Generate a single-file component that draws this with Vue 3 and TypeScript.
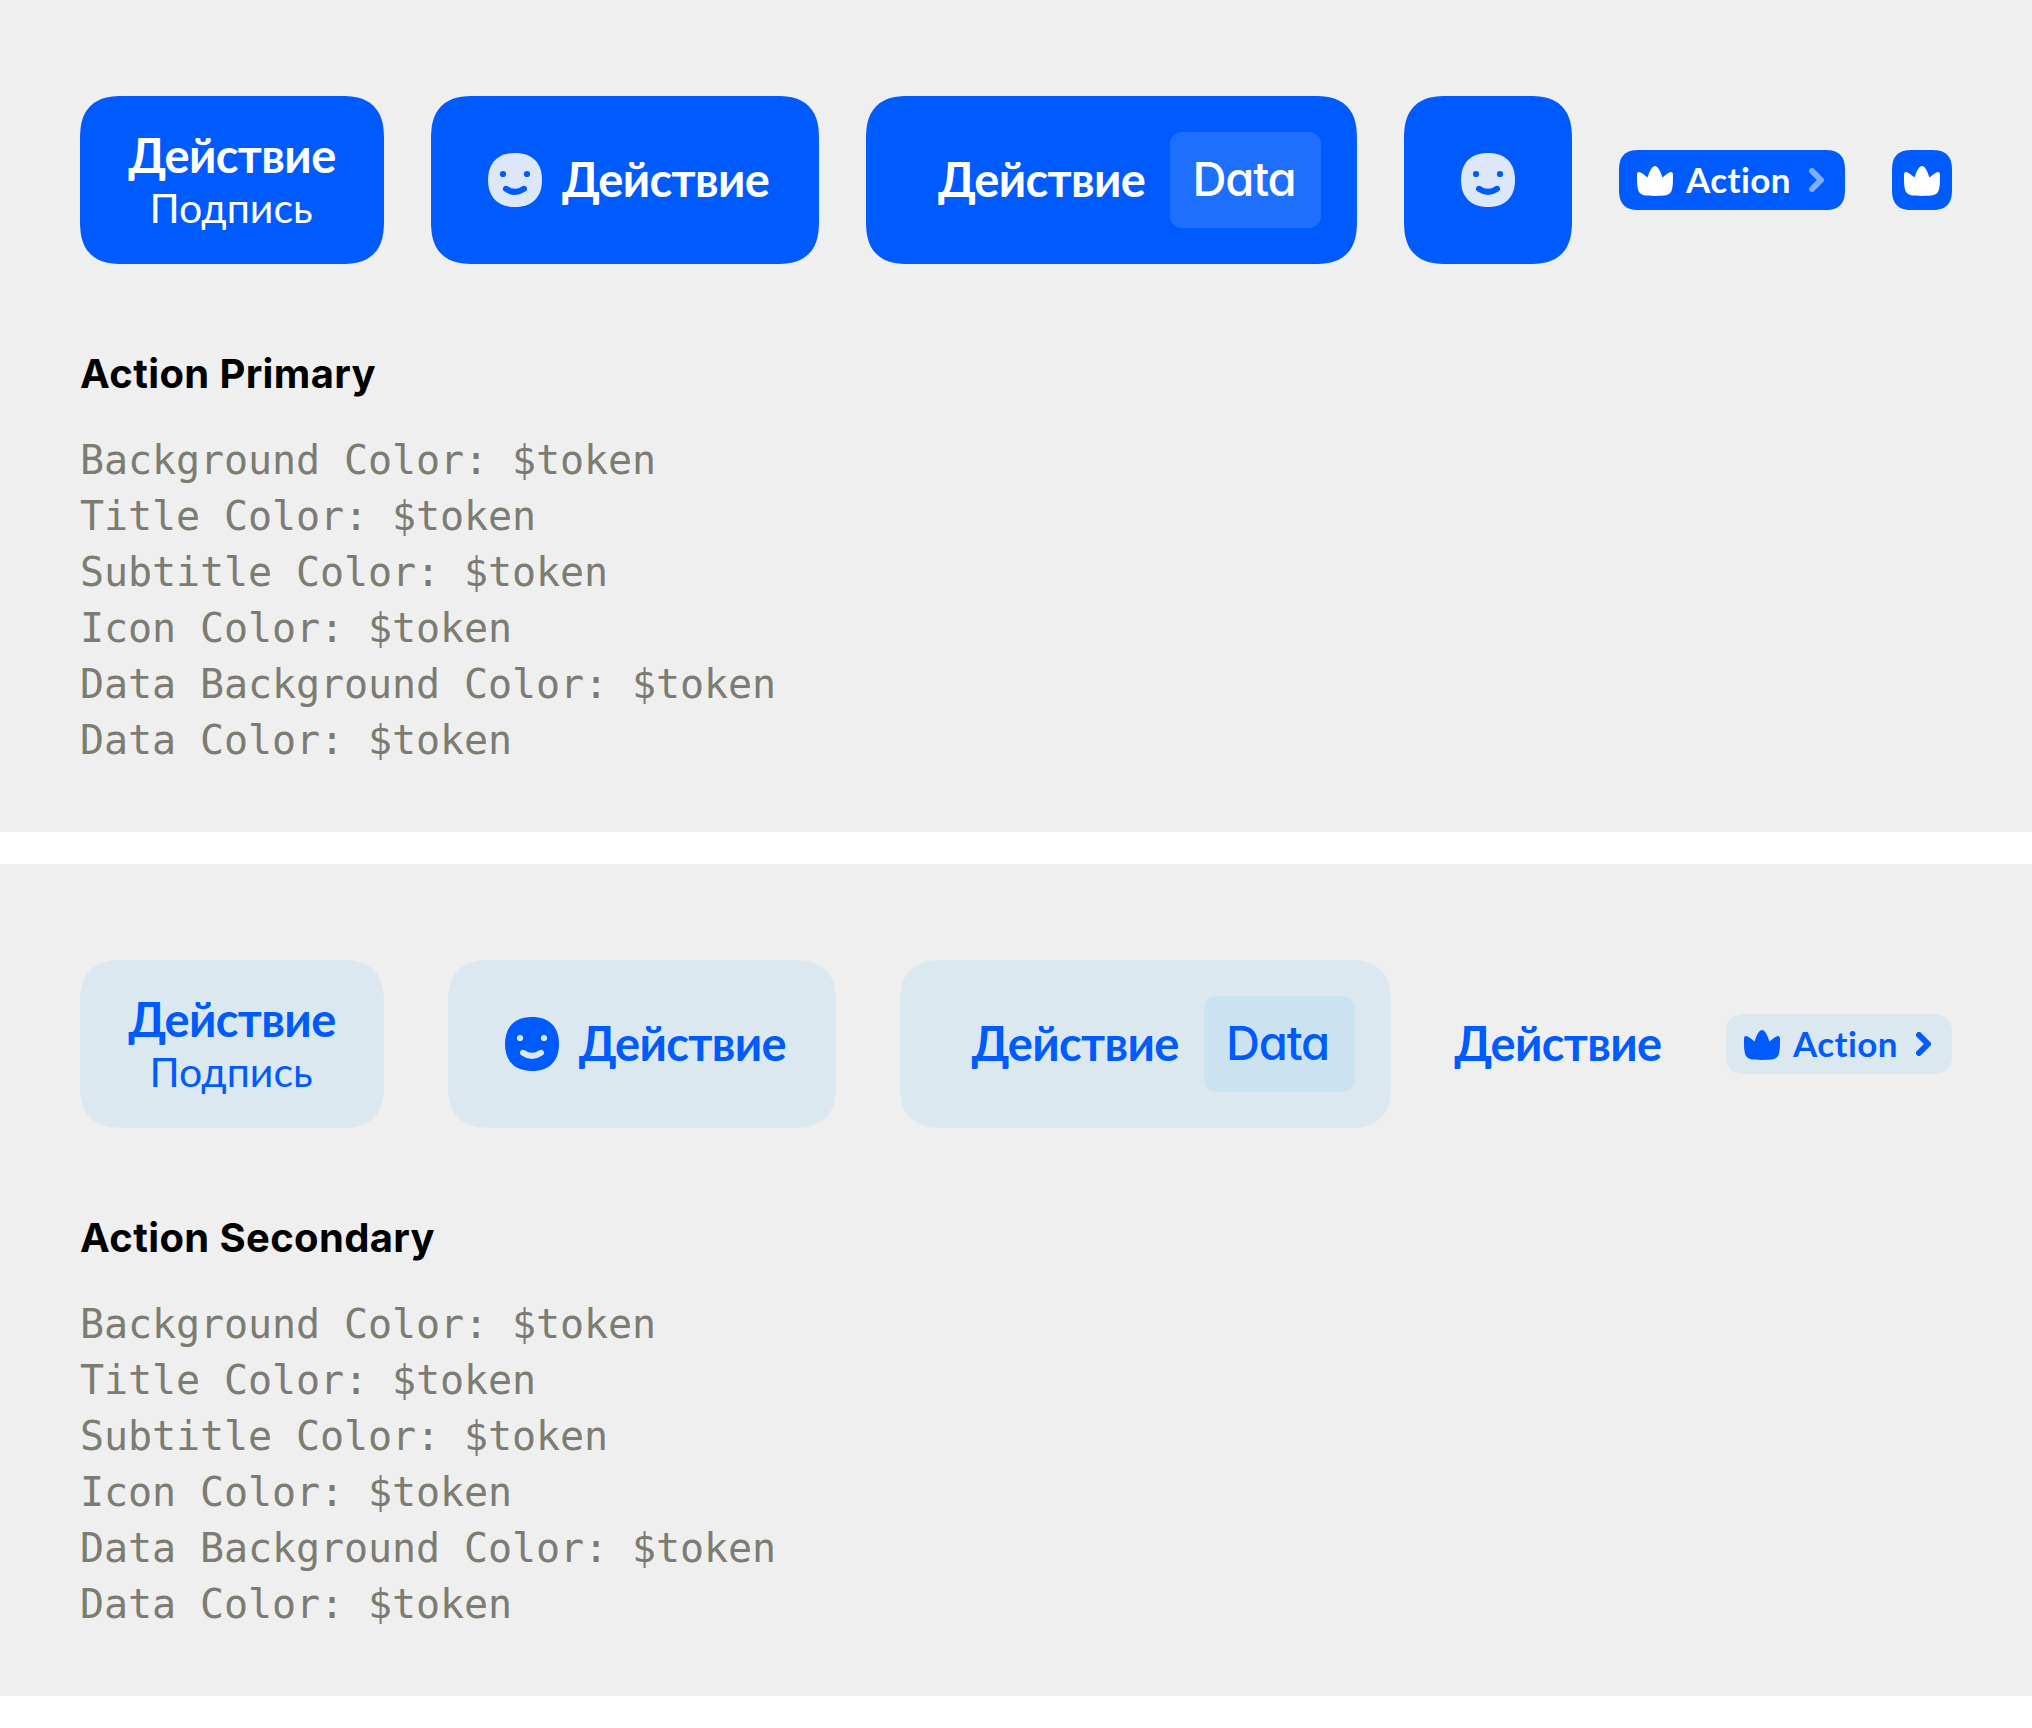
<script setup lang="ts">
type ItemKind = 'double' | 'icon' | 'data' | 'square' | 'text' | 'chip' | 'mini'

interface Section {
  theme: 'primary' | 'secondary'
  title: string
  items: ItemKind[]
}

const sections: Section[] = [
  { theme: 'primary', title: 'Action Primary', items: ['double', 'icon', 'data', 'square', 'chip', 'mini'] },
  { theme: 'secondary', title: 'Action Secondary', items: ['double', 'icon', 'data', 'text', 'chip'] },
]

const tokens: string[] = ['Background', 'Title', 'Subtitle', 'Icon', 'Data Background', 'Data']
</script>

<template>
  <main class="page">
    <section v-for="section in sections" :key="section.theme" class="panel" :class="section.theme">
      <div class="row">
        <div v-for="item in section.items" :key="item" class="item" :class="item">
          <svg v-if="item === 'icon' || item === 'square'" class="face" viewBox="0 0 54 54">
            <path class="head" d="M27 0C44.2 0 54 9.8 54 27S44.2 54 27 54 0 44.2 0 27 9.8 0 27 0Z" />
            <circle class="eye" cx="15" cy="21" r="3.1" />
            <circle class="eye" cx="39" cy="21" r="3.1" />
            <path class="mouth" d="M18 35.8Q27 42 36 35.8" />
          </svg>
          <svg v-if="item === 'chip' || item === 'mini'" class="crown" viewBox="0 0 36 30">
            <path d="M18 0C20.6 0 23.2 4.2 25.4 11.5C28.4 8.8 31.5 6.3 33.8 5.9C35.6 5.7 36 7.2 36 9.5C36 17 35.8 22 34.2 25.6C32.4 29.4 28 30 18 30S3.6 29.4 1.8 25.6C0.2 22 0 17 0 9.5C0 7.2 0.4 5.7 2.2 5.9C4.5 6.3 7.6 8.8 10.6 11.5C12.8 4.2 15.4 0 18 0Z" />
          </svg>
          <span v-if="item === 'double' || item === 'icon' || item === 'data' || item === 'text'" class="title">Действие</span>
          <span v-if="item === 'double'" class="subtitle">Подпись</span>
          <span v-if="item === 'data'" class="badge">Data</span>
          <template v-if="item === 'chip'">
            <span class="label">Action</span>
            <svg class="chevron" viewBox="0 0 15 24"><path d="M3 3L12 12L3 21" /></svg>
          </template>
        </div>
      </div>
      <h2 class="heading">{{ section.title }}</h2>
      <ul class="tokens">
        <li v-for="token in tokens" :key="token">{{ token }} Color: $token</li>
      </ul>
    </section>
  </main>
</template>

<style>
body {
  background: #fff;
}
</style>

<style scoped>
.page {
  display: flex;
  flex-direction: column;
  gap: 32px;
  width: 2032px;
  height: 1728px;
}
.panel {
  box-sizing: border-box;
  height: 832px;
  padding: 96px 80px 64px;
  background: #efefef;
}
.primary {
  --bg: #005bff;
  --title: #fff;
  --icon: #dce7fa;
  --crown: #fff;
  --chevron: #80adff;
  --data-bg: #1f6fff;
}
.secondary {
  --bg: #dbe8f0;
  --title: #005bff;
  --icon: #005bff;
  --crown: #005bff;
  --chevron: #005bff;
  --data-bg: #cbe2f1;
}
.row {
  display: flex;
  align-items: center;
  justify-content: space-between;
  height: 168px;
}
.item {
  box-sizing: border-box;
  display: flex;
  align-items: center;
  flex: none;
  height: 168px;
  background: var(--bg);
  border-radius: 44px;
  corner-shape: superellipse(1.4);
  color: var(--title);
  font-family: Lato, "Open Sans", sans-serif;
  font-variant-ligatures: none;
  white-space: nowrap;
}
.double {
  width: 304px;
  flex-direction: column;
  padding-top: 31px;
}
.icon {
  width: 388px;
  padding-left: 57px;
}
.data {
  width: 491px;
  justify-content: space-between;
  padding: 0 36px 0 72px;
}
.square {
  width: 168px;
  justify-content: center;
}
.text {
  width: 208px;
  background: none;
}
.title {
  font-size: 47px;
  font-weight: 700;
  line-height: 56px;
  letter-spacing: -0.6px;
  padding-bottom: 3px;
}
.double .title {
  padding-bottom: 1px;
}
.icon .title {
  margin-left: 20px;
}
.subtitle {
  margin-left: -2px;
  font-size: 41px;
  line-height: 48px;
}
.badge {
  box-sizing: border-box;
  width: 151px;
  height: 96px;
  padding: 0 3px 2px 0;
  border-radius: 12px;
  background: var(--data-bg);
  font-family: Inter, sans-serif;
  font-feature-settings: "cv11";
  font-size: 47px;
  font-weight: 450;
  line-height: 94px;
  letter-spacing: -1.1px;
  text-align: center;
}
.chip,
.mini {
  height: 60px;
  border-radius: 21px;
  corner-shape: superellipse(1.4);
}
.chip {
  width: 226px;
  padding-left: 18px;
}
.mini {
  width: 60px;
  justify-content: center;
}
.label {
  width: 104px;
  margin: 0 19px 0 13px;
  padding-bottom: 3px;
  font-size: 35px;
  font-weight: 700;
  line-height: 40px;
  letter-spacing: 0.4px;
}
.face {
  width: 54px;
  height: 54px;
}
.head {
  fill: var(--icon);
}
.eye {
  fill: var(--bg);
}
.mouth {
  fill: none;
  stroke: var(--bg);
  stroke-width: 6;
  stroke-linecap: round;
}
.crown {
  width: 36px;
  height: 30px;
  margin-top: 2px;
  fill: var(--crown);
}
.chevron {
  width: 15px;
  height: 24px;
  fill: none;
  stroke: var(--chevron);
  stroke-width: 6;
  stroke-linecap: round;
  stroke-linejoin: round;
}
.heading {
  margin: 82px 0 30px;
  font: 700 40px/56px Inter, sans-serif;
  letter-spacing: 0.36px;
  color: #000;
}
.tokens {
  margin: 0;
  padding: 0;
  list-style: none;
  font: 40px/56px "DejaVu Sans Mono", monospace;
  letter-spacing: -0.08px;
  color: #7d7c72;
}
</style>
